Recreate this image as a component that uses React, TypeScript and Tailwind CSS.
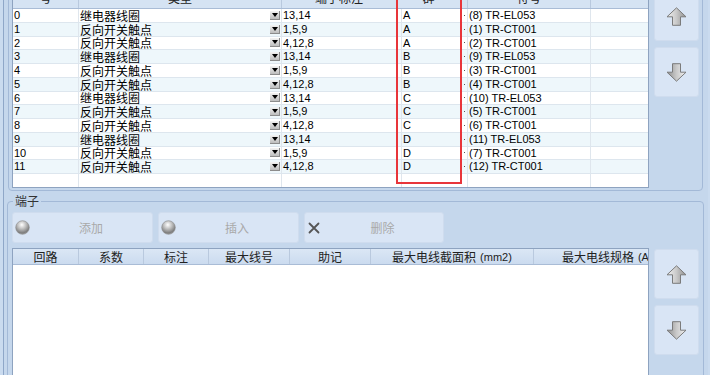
import React from "react";

const rows = [
  ["0", "继电器线圈", "13,14", "A", "(8) TR-EL053"],
  ["1", "反向开关触点", "1,5,9", "A", "(1) TR-CT001"],
  ["2", "反向开关触点", "4,12,8", "A", "(2) TR-CT001"],
  ["3", "继电器线圈", "13,14", "B", "(9) TR-EL053"],
  ["4", "反向开关触点", "1,5,9", "B", "(3) TR-CT001"],
  ["5", "反向开关触点", "4,12,8", "B", "(4) TR-CT001"],
  ["6", "继电器线圈", "13,14", "C", "(10) TR-EL053"],
  ["7", "反向开关触点", "1,5,9", "C", "(5) TR-CT001"],
  ["8", "反向开关触点", "4,12,8", "C", "(6) TR-CT001"],
  ["9", "继电器线圈", "13,14", "D", "(11) TR-EL053"],
  ["10", "反向开关触点", "1,5,9", "D", "(7) TR-CT001"],
  ["11", "反向开关触点", "4,12,8", "D", "(12) TR-CT001"],
];

const latin = "font-['Liberation_Sans',sans-serif] text-[11px]";
const cjk = "font-['Noto_Sans_CJK_SC',sans-serif] text-[12px]";

function Arrow({ down = false }: { down?: boolean }) {
  return (
    <svg width="21" height="19" viewBox="0 0 21 19" className={down ? "rotate-180" : ""}>
      <defs>
        <linearGradient id={down ? "ad" : "au"} x1="0" y1="0" x2="1" y2="0">
          <stop offset="0" stopColor="#f1f1f1" />
          <stop offset="0.5" stopColor="#c9c9c9" />
          <stop offset="1" stopColor="#8f8f8f" />
        </linearGradient>
      </defs>
      <path
        d="M10.5 0.8 L20 9.8 H14.5 V18.3 H6.5 V9.8 H1 Z"
        fill={`url(#${down ? "ad" : "au"})`}
        stroke="#7b7b7b"
        strokeWidth="1"
        strokeLinejoin="round"
      />
    </svg>
  );
}

function Sphere() {
  return (
    <svg width="15" height="15" viewBox="0 0 15 15">
      <defs>
        <radialGradient id="sp" cx="0.45" cy="0.3" r="0.7">
          <stop offset="0" stopColor="#ffffff" />
          <stop offset="0.45" stopColor="#bdbdbd" />
          <stop offset="0.85" stopColor="#7e7e7e" />
          <stop offset="1" stopColor="#9a9a9a" />
        </radialGradient>
      </defs>
      <circle cx="7.5" cy="7.5" r="6.8" fill="url(#sp)" stroke="#8a8a8a" strokeWidth="0.6" />
    </svg>
  );
}

function Cross() {
  return (
    <svg width="12" height="12" viewBox="0 0 12 12">
      <path d="M1.5 1.5 L10.5 10.5 M10.5 1.5 L1.5 10.5" stroke="#555" strokeWidth="1.8" strokeLinecap="round" />
    </svg>
  );
}

function SideButtons({ top }: { top: string }) {
  return (
    <div className={`ml-[5px] flex w-[45px] flex-col gap-[6px] ${top}`}>
      <div className="flex h-[50px] items-center justify-center rounded-[3px] border border-[#cfdcee] bg-[#d9e5f5]">
        <Arrow />
      </div>
      <div className="flex h-[50px] items-center justify-center rounded-[3px] border border-[#cfdcee] bg-[#d9e5f5]">
        <Arrow down />
      </div>
    </div>
  );
}

function Dropdown() {
  return (
    <div className="mr-[1px] flex h-[9px] w-[10px] items-start justify-center border-b border-r border-[#8c8c8c] bg-gradient-to-b from-[#f4f4f4] to-[#bdbdbd] pt-[2px]">
      <div className="h-0 w-0 border-x-[3px] border-t-[4px] border-x-transparent border-t-black" />
    </div>
  );
}

function ToolButton({ icon, label, w }: { icon: React.ReactNode; label: string; w: string }) {
  return (
    <div className={`flex h-[31px] items-center rounded-[3px] border border-[#cfdcee] bg-[#d9e5f5] pl-[1px] ${w}`}>
      <div className="flex w-[16px] justify-center">{icon}</div>
      <div className={`flex-1 text-center text-[#a9a9a9] ${cjk}`}>{label}</div>
    </div>
  );
}

const lowerCols: [string, string, string?][] = [
  ["w-[66px]", "回路"],
  ["w-[65px]", "系数"],
  ["w-[65px]", "标注"],
  ["w-[81px]", "最大线号"],
  ["w-[81px]", "助记"],
  ["w-[163px]", "最大电线截面积", "(mm2)"],
  ["w-[166px]", "最大电线规格", "(AWG)"],
];

export default function App() {
  return (
    <div className="relative flex h-[375px] w-[710px] overflow-hidden bg-[#cadbef] pl-[3px] pr-[2px] text-black">
      <div className="flex flex-1 flex-col border-l border-[#8fa7c8] bg-[#c5d7ec]">
        {/* upper panel */}
        <div className="-mt-[16px] ml-[4px] flex w-[695px] rounded-[4px] border border-[#a3b9d7] pb-[2px] pl-[3px] pt-[2px]">
          <div className="flex h-[201px] w-[637px] flex-col overflow-hidden border border-[#8ea3c0] bg-white">
            <div className={`flex h-[21px] shrink-0 border-b border-[#a9bcd6] bg-[#d5e3f3] text-[#222] ${cjk}`}>
              <div className="flex w-[66px] items-center justify-center border-r border-[#b9c9de]">号</div>
              <div className="flex w-[203px] items-center justify-center border-r border-[#b9c9de]">类型</div>
              <div className="flex w-[115px] items-center justify-center border-r border-[#b9c9de]">端子标注</div>
              <div className="flex w-[64px] items-center justify-center border-r border-[#b9c9de]">群</div>
              <div className="w-[7px] border-r border-[#b9c9de]" />
              <div className="flex w-[123px] items-center justify-center border-r border-[#b9c9de]">符号</div>
              <div className="flex-1" />
            </div>
            {rows.map((r, i) => (
              <div
                key={r[0]}
                className={`flex h-[13.75px] shrink-0 items-center border-b border-[#dde6ee] ${i % 2 ? "bg-[#eef7fb]" : "bg-white"}`}
              >
                <div className={`flex h-full w-[66px] items-center border-r border-[#dfe6ed] pl-[1px] ${latin}`}>{r[0]}</div>
                <div className="flex h-full w-[203px] items-center justify-between border-r border-[#dfe6ed] pl-[1px]">
                  <span className={`${cjk} leading-[13px]`}>{r[1]}</span>
                  <Dropdown />
                </div>
                <div className={`flex h-full w-[120px] items-center border-r border-[#dfe6ed] pl-[1px] ${latin}`}>{r[2]}</div>
                <div className={`flex h-full w-[60px] items-center pl-[1px] ${latin}`}>{r[3]}</div>
                <div className="flex h-full w-[6px] items-center justify-center border-r border-[#dfe6ed]">
                  <div className="h-[1px] w-[1px] bg-[#555]" />
                </div>
                <div className={`flex h-full w-[123px] items-center border-r border-[#dfe6ed] pl-[1px] ${latin}`}>{r[4]}</div>
                <div className="flex-1" />
              </div>
            ))}
            <div className="flex flex-1">
              <div className="w-[66px] border-r border-[#dfe6ed]" />
              <div className="w-[203px] border-r border-[#dfe6ed]" />
              <div className="w-[120px] border-r border-[#dfe6ed]" />
              <div className="w-[66px] border-r border-[#dfe6ed]" />
              <div className="w-[123px] border-r border-[#dfe6ed]" />
            </div>
          </div>
          <SideButtons top="pt-[4px]" />
        </div>

        <div className="mt-[4px] h-px bg-[#e3edf8]" />

        {/* 端子 group */}
        <fieldset className="ml-[3px] w-[697px] rounded-[4px] border border-[#a3b9d7] pl-[4px] pr-[3px] pt-[5px]">
          <legend className={`ml-[1px] px-[2px] leading-[12px] text-[#333] ${cjk}`}>端子</legend>
          <div className="flex gap-[5px]">
            <ToolButton icon={<Sphere />} label="添加" w="w-[141px]" />
            <ToolButton icon={<Sphere />} label="插入" w="w-[141px]" />
            <ToolButton icon={<Cross />} label="删除" w="w-[140px]" />
          </div>
          <div className="mt-[5px] flex">
            <div className="h-[200px] w-[637px] overflow-hidden border border-[#8ea3c0] bg-white">
              <div className="flex h-[16px] border-b border-[#a9bcd6] bg-gradient-to-b from-[#dbe7f5] to-[#cbdbef] text-[#222]">
                {lowerCols.map(([w, t, extra]) => (
                  <div
                    key={t}
                    className={`flex shrink-0 items-center justify-center gap-[4px] whitespace-nowrap border-r border-[#b9c9de] ${w} ${cjk} leading-[14px]`}
                  >
                    <span>{t}</span>
                    {extra && <span className={latin}>{extra}</span>}
                  </div>
                ))}
              </div>
            </div>
            <SideButtons top="pt-[1px]" />
          </div>
        </fieldset>
      </div>

      {/* red annotation box */}
      <div className="pointer-events-none absolute left-[396px] top-[-5px] h-[189px] w-[66px] border-2 border-[#e8353a]" />
    </div>
  );
}
